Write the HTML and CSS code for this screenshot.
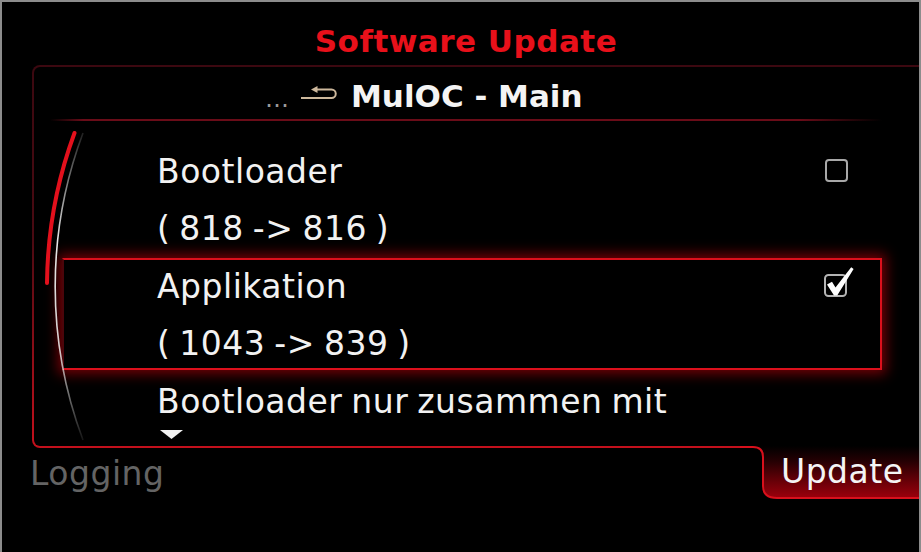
FILE: index.html
```html
<!DOCTYPE html>
<html>
<head>
<meta charset="utf-8">
<link rel="stylesheet" href="styles.css">
</head>
<body>
<div class="screen">
  <h1 class="title">Software Update</h1>
  <div class="panel">
    <div class="panel-inner">
      <div class="crumb">
        <span class="dots">…</span>
        <svg class="back" width="36" height="14" viewBox="0 0 36 14">
          <path d="M0 12 H30.5 A4.25 4.25 0 0 0 30.5 3.5 H15" fill="none" stroke="#cdb89c" stroke-width="2"/>
          <path d="M10 3.5 L16.5 0 L16.5 7 Z" fill="#cdb89c"/>
        </svg>
        <span class="crumb-text">MulOC - Main</span>
      </div>
      <div class="crumb-sep"></div>
      <div class="list">
        <svg class="scroll" width="60" height="325" viewBox="0 0 60 325">
          <defs>
            <linearGradient id="wg" gradientUnits="userSpaceOnUse" x1="0" y1="12" x2="0" y2="319">
              <stop offset="0" stop-color="#d8d8d8" stop-opacity="0.15"/>
              <stop offset="0.35" stop-color="#e6e6e6" stop-opacity="1"/>
              <stop offset="0.7" stop-color="#e6e6e6" stop-opacity="0.9"/>
              <stop offset="1" stop-color="#d8d8d8" stop-opacity="0.1"/>
            </linearGradient>
          </defs>
          <path d="M49 12 A437.5 437.5 0 0 0 49 319" fill="none" stroke="url(#wg)" stroke-width="1.6"/>
          <path d="M40.5 12 A445.5 445.5 0 0 0 13 162" fill="none" stroke="#e3101c" stroke-width="4" stroke-linecap="round"/>
        </svg>
        <div class="item">
          <div class="line"><span>Bootloader</span><span class="box"></span></div>
          <div class="line second"><span>( 818 -&gt; 816 )</span></div>
        </div>
        <div class="item selected">
          <div class="line"><span>Applikation</span>
            <svg class="box-checked" width="30" height="31" viewBox="0 0 30 31">
              <rect x="1" y="8" width="21" height="21" rx="3.5" fill="none" stroke="#b4b4b4" stroke-width="2"/>
              <path d="M3 17.5 L8 14.8 L11.5 20.5 L27.2 0.3 L29.6 2 L13.2 28.5 L10 28.5 Z" fill="#ffffff"/>
            </svg>
          </div>
          <div class="line second"><span>( 1043 -&gt; 839 )</span></div>
        </div>
        <div class="item">
          <div class="line"><span>Bootloader nur zusammen mit</span></div>
          <div class="line top"><svg class="more" width="23" height="9" viewBox="0 0 23 9"><path d="M0 0 H23 L11.5 9 Z" fill="#f2f2f2"/></svg></div>
        </div>
      </div>
    </div>
  </div>
  <div class="footer">
    <span class="logging">Logging</span>
    <div class="tab">
      <svg class="tab-shape" width="179" height="54" viewBox="0 0 179 54">
        <defs>
          <linearGradient id="tg" x1="0" y1="0" x2="0" y2="1">
            <stop offset="0" stop-color="#000000"/>
            <stop offset="0.3" stop-color="#260003"/>
            <stop offset="0.7" stop-color="#6c0008"/>
            <stop offset="1" stop-color="#9c000c"/>
          </linearGradient>
        </defs>
        <path d="M13 0 Q23 0 23 11 V40 Q23 52 37 52 H179 V0 Z" fill="url(#tg)"/>
        <path d="M0 1 H13 Q23 1 23 11 V40 Q23 52 37 52 H179" fill="none" stroke="#d8101c" stroke-width="2"/>
      </svg>
      <span class="tab-text">Update</span>
    </div>
  </div>
</div>
</body>
</html>
```
FILE: styles.css
```css
html, body {
  margin: 0;
  padding: 0;
  background: #000;
}
.screen {
  width: 921px;
  height: 552px;
  box-sizing: border-box;
  border: 2px solid #8c8c8c;
  border-bottom: none;
  background: #000;
  font-family: "DejaVu Sans", Verdana, sans-serif;
  color: #f2f2f2;
  overflow: hidden;
}
.title {
  margin: 0;
  height: 63px;
  box-sizing: border-box;
  padding-top: 19px;
  padding-left: 11px;
  line-height: 40px;
  font-size: 31px;
  letter-spacing: 0.5px;
  font-weight: bold;
  color: #e8101a;
  text-align: center;
}
.panel {
  margin-left: 30px;
  height: 383px;
  box-sizing: border-box;
  padding: 2px 0 2px 2px;
  border-radius: 8px 0 0 8px;
  background: linear-gradient(#3c0810, #4a0a12 45%, #c4101c);
}
.panel-inner {
  position: relative;
  height: 100%;
  background: #000;
  border-radius: 6px 0 0 6px;
  overflow: hidden;
}
.crumb {
  height: 52px;
  box-sizing: border-box;
  padding-top: 7px;
  padding-left: 231px;
  display: flex;
  align-items: baseline;
  line-height: 45px;
}
.dots {
  font-size: 24px;
  color: #9a9a9a;
}
.back {
  margin-left: 12px;
  margin-right: 14px;
  margin-top: 12px;
  align-self: flex-start;
}
.crumb-text {
  font-size: 31px;
  font-weight: bold;
  color: #f4f4f4;
}
.crumb-sep {
  height: 2px;
  margin: 0 37px 0 16px;
  background: linear-gradient(to right, rgba(106,12,24,0), #6a0c18 4%, #6a0c18 90%, rgba(106,12,24,0));
}
.list {
  position: relative;
  height: 325px;
  box-sizing: border-box;
  padding: 22px 0 0 28px;
  overflow: hidden;
}
.scroll {
  position: absolute;
  left: 0;
  top: 0;
}
.item {
  width: 820px;
  height: 115px;
  box-sizing: border-box;
  border: 2px solid transparent;
  padding-left: 93px;
  font-size: 33px;
  letter-spacing: 0.5px;
  word-spacing: -2px;
}
.item.selected {
  height: 112px;
  margin-bottom: 3px;
  border-color: #dc101c;
  border-left-color: rgba(150,10,20,0.5);
  box-shadow: 0 0 12px 4px rgba(190, 0, 10, 0.6);
}
.line {
  height: 54px;
  line-height: 54px;
  display: flex;
  align-items: center;
}
.line.second {
  padding-top: 3px;
}
.line.top {
  align-items: flex-start;
}
.box {
  margin-left: auto;
  margin-right: 32px;
  margin-top: -4px;
  width: 23px;
  height: 23px;
  box-sizing: border-box;
  border: 2px solid #a8a8a8;
  border-radius: 4px;
}
.box-checked {
  margin-left: auto;
  margin-right: 26px;
  margin-top: -10px;
}
.more {
  margin-left: 3px;
  margin-top: 1px;
}
.footer {
  display: flex;
  justify-content: space-between;
  margin-top: -2px;
  height: 54px;
  font-size: 33px;
  letter-spacing: 0.5px;
}
.logging {
  padding-left: 28px;
  padding-top: 3px;
  line-height: 50px;
  color: #646464;
}
.tab {
  position: relative;
  width: 179px;
  height: 54px;
  background: #000;
  box-sizing: border-box;
  padding-left: 41px;
  padding-top: 1px;
}
.tab-shape {
  position: absolute;
  left: 0;
  top: 0;
}
.tab-text {
  position: relative;
  display: block;
  line-height: 50px;
  color: #f4f4f4;
}
```
